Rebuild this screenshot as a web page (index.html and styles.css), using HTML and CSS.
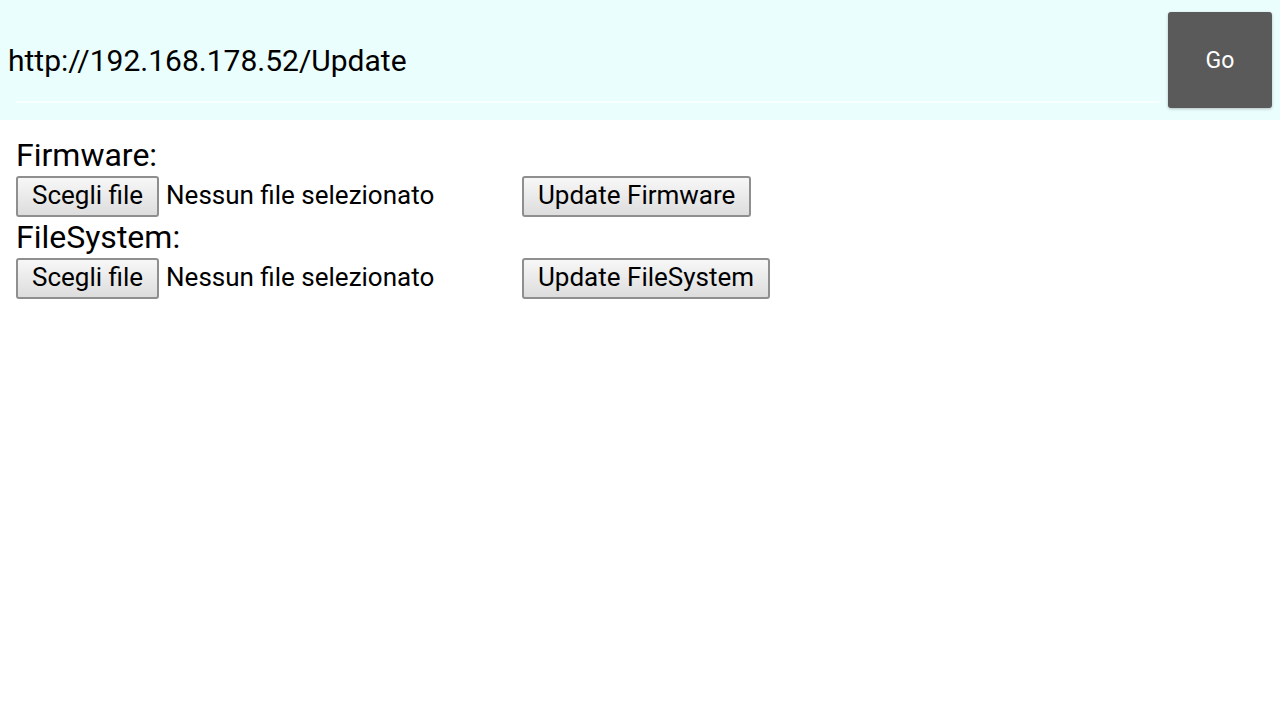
FILE: index.html
```html
<!DOCTYPE html>
<html lang="it">
<head>
<meta charset="utf-8">
<title>Update</title>
<link rel="stylesheet" href="styles.css">
</head>
<body>
<header class="bar">
  <div class="url-field">
    <span class="url-text">http://192.168.178.52/Update</span>
  </div>
  <button class="go-btn">Go</button>
</header>
<main class="content">
  <div class="label">Firmware:</div>
  <div class="row">
    <div class="file-pick">
      <span class="btn">Scegli file</span>
      <span class="file-name">Nessun file selezionato</span>
    </div>
    <span class="btn">Update Firmware</span>
  </div>
  <div class="label">FileSystem:</div>
  <div class="row">
    <div class="file-pick">
      <span class="btn">Scegli file</span>
      <span class="file-name">Nessun file selezionato</span>
    </div>
    <span class="btn">Update FileSystem</span>
  </div>
</main>
</body>
</html>
```

FILE: styles.css
```css
* { box-sizing: border-box; }
html, body { margin: 0; padding: 0; background: #ffffff; }
body { font-family: Roboto, "Noto Sans", sans-serif; color: #000; }

.bar {
  height: 120px;
  background: #ebfefe;
  display: flex;
  align-items: center;
  padding: 0 8px 0 8px;
}
.url-field {
  flex: 1;
  height: 120px;
  display: flex;
  align-items: center;
  position: relative;
}
.url-field::after {
  content: "";
  position: absolute;
  left: 8px;
  right: 8px;
  bottom: 17px;
  height: 2px;
  background: #f7ffff;
}
.url-text {
  font-size: 30px;
  line-height: 40px;
  padding-top: 2px;
}
.go-btn {
  width: 104px;
  height: 96px;
  background: #5a5a5a;
  color: #ffffff;
  border: none;
  border-radius: 3px;
  font-family: Roboto, sans-serif;
  font-size: 23px;
  padding-top: 2px;
  box-shadow: 0 1px 3px rgba(0,0,0,0.25);
}

.content {
  padding: 15px 16px 0 16px;
}
.label {
  font-size: 32px;
  line-height: 41px;
  height: 41px;
}
.row {
  display: flex;
  align-items: center;
  height: 41px;
}
.file-pick {
  width: 506px;
  display: flex;
  align-items: center;
}
.btn {
  display: inline-flex;
  align-items: center;
  height: 41px;
  padding: 0 14px 3px 14px;
  border: 2px solid #8f8f8f;
  border-radius: 3px;
  background: linear-gradient(#f7f7f7, #dddddd);
  font-size: 26px;
  line-height: 1;
}
.file-name {
  font-size: 26px;
  margin-left: 7px;
  padding-bottom: 3px;
}
```
